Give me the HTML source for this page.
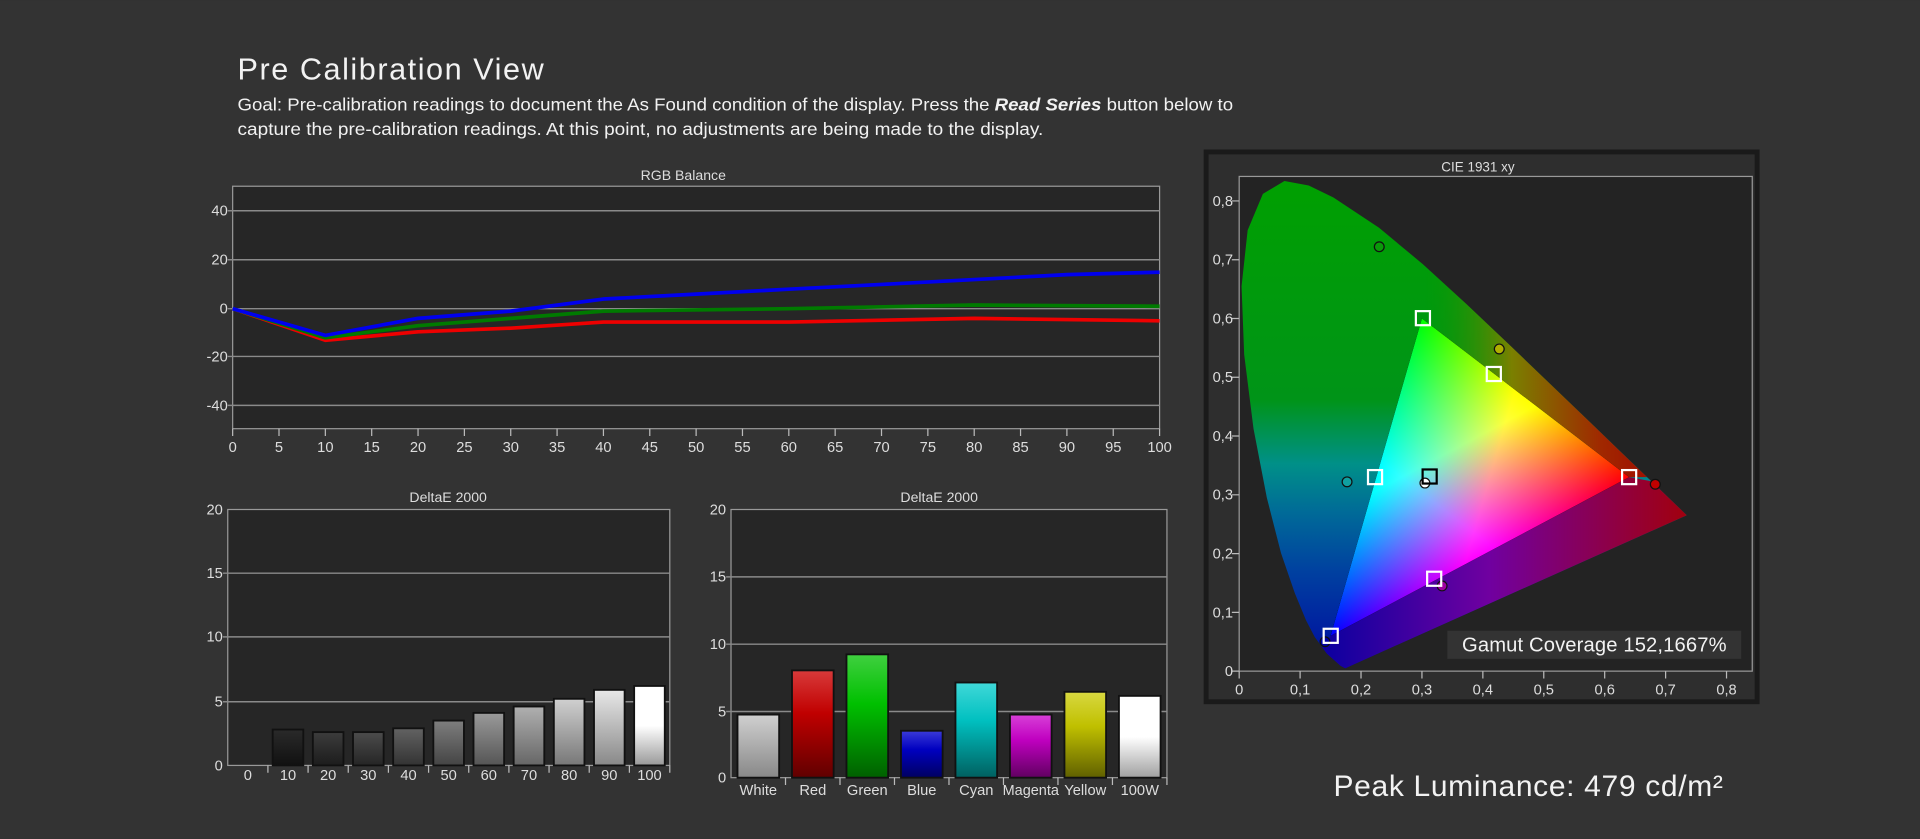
<!DOCTYPE html>
<html><head><meta charset="utf-8"><style>
html,body{margin:0;padding:0;background:#333;width:1920px;height:839px;overflow:hidden}
svg{display:block}
text{font-family:"Liberation Sans",sans-serif}
</style></head><body>
<svg width="1920" height="839" viewBox="0 0 1568 685" xmlns="http://www.w3.org/2000/svg">
<defs>
<linearGradient id="loc" x1="0" y1="0.84" x2="0" y2="0" gradientUnits="userSpaceOnUse">
<stop offset="0" stop-color="#00a000"/><stop offset="0.45" stop-color="#009418"/><stop offset="0.58" stop-color="#009088"/><stop offset="0.68" stop-color="#006a98"/><stop offset="0.8" stop-color="#0040a0"/><stop offset="1" stop-color="#0008a0"/>
</linearGradient>
<linearGradient id="rreg" x1="0.3" y1="0" x2="0.72" y2="0" gradientUnits="userSpaceOnUse">
<stop offset="0" stop-color="#009a00" stop-opacity="0"/><stop offset="0.35" stop-color="#7a8000"/><stop offset="0.7" stop-color="#a02800"/><stop offset="1" stop-color="#a00000"/>
</linearGradient>
<linearGradient id="preg" x1="0.15" y1="0" x2="0.73" y2="0" gradientUnits="userSpaceOnUse">
<stop offset="0" stop-color="#1000a0"/><stop offset="0.45" stop-color="#7000a0"/><stop offset="1" stop-color="#a00010"/>
</linearGradient>
<linearGradient id="tr" x1="0.64" y1="0.33" x2="0.2547" y2="0.437" gradientUnits="userSpaceOnUse">
<stop offset="0" stop-color="#ff0000"/><stop offset="0.55" stop-color="#ff0000"/><stop offset="1" stop-color="#000"/>
</linearGradient>
<linearGradient id="tg" x1="0.30" y1="0.60" x2="0.4933" y2="0.2492" gradientUnits="userSpaceOnUse">
<stop offset="0" stop-color="#00ff00"/><stop offset="0.55" stop-color="#00ff00"/><stop offset="1" stop-color="#000"/>
</linearGradient>
<linearGradient id="tb" x1="0.15" y1="0.06" x2="0.471" y2="0.4642" gradientUnits="userSpaceOnUse">
<stop offset="0" stop-color="#0000ff"/><stop offset="0.55" stop-color="#0000ff"/><stop offset="1" stop-color="#000"/>
</linearGradient>
<clipPath id="lc"><path d="M0.1741,0.005 L0.1666,0.0089 0.144,0.0297 0.1241,0.0578 0.1096,0.0868 0.0913,0.1327 0.0687,0.2007 0.0454,0.295 0.0235,0.4127 0.0082,0.5384 0.0039,0.6548 0.0139,0.7502 0.0389,0.812 0.0743,0.8338 0.1142,0.8262 0.1547,0.8059 0.2296,0.7543 0.3016,0.6923 0.3731,0.6245 0.4441,0.5547 0.5125,0.4866 0.5752,0.4242 0.627,0.3725 0.6915,0.3083 0.7347,0.2653 Z"/></clipPath>
<linearGradient id="b1" x1="0" y1="0" x2="0" y2="1"><stop offset="0" stop-color="#2a2a2a"/><stop offset="1" stop-color="#111"/></linearGradient>
<linearGradient id="b2" x1="0" y1="0" x2="0" y2="1"><stop offset="0" stop-color="#3c3c3c"/><stop offset="1" stop-color="#1c1c1c"/></linearGradient>
<linearGradient id="b3" x1="0" y1="0" x2="0" y2="1"><stop offset="0" stop-color="#4c4c4c"/><stop offset="1" stop-color="#252525"/></linearGradient>
<linearGradient id="b4" x1="0" y1="0" x2="0" y2="1"><stop offset="0" stop-color="#626262"/><stop offset="1" stop-color="#333"/></linearGradient>
<linearGradient id="b5" x1="0" y1="0" x2="0" y2="1"><stop offset="0" stop-color="#7e7e7e"/><stop offset="1" stop-color="#444"/></linearGradient>
<linearGradient id="b6" x1="0" y1="0" x2="0" y2="1"><stop offset="0" stop-color="#9a9a9a"/><stop offset="1" stop-color="#555"/></linearGradient>
<linearGradient id="b7" x1="0" y1="0" x2="0" y2="1"><stop offset="0" stop-color="#b0b0b0"/><stop offset="1" stop-color="#666"/></linearGradient>
<linearGradient id="b8" x1="0" y1="0" x2="0" y2="1"><stop offset="0" stop-color="#d0d0d0"/><stop offset="1" stop-color="#777"/></linearGradient>
<linearGradient id="b9" x1="0" y1="0" x2="0" y2="1"><stop offset="0" stop-color="#e8e8e8"/><stop offset="1" stop-color="#888"/></linearGradient>
<linearGradient id="b10" x1="0" y1="0" x2="0" y2="1"><stop offset="0" stop-color="#fff"/><stop offset="0.5" stop-color="#fff"/><stop offset="1" stop-color="#999"/></linearGradient>
<linearGradient id="cW" x1="0" y1="0" x2="0" y2="1"><stop offset="0" stop-color="#d0d0d0"/><stop offset="1" stop-color="#888"/></linearGradient>
<linearGradient id="cR" x1="0" y1="0" x2="0" y2="1"><stop offset="0" stop-color="#d83a3a"/><stop offset="0.4" stop-color="#c00000"/><stop offset="1" stop-color="#600000"/></linearGradient>
<linearGradient id="cG" x1="0" y1="0" x2="0" y2="1"><stop offset="0" stop-color="#40d040"/><stop offset="0.4" stop-color="#00c000"/><stop offset="1" stop-color="#006000"/></linearGradient>
<linearGradient id="cB" x1="0" y1="0" x2="0" y2="1"><stop offset="0" stop-color="#3a3ad8"/><stop offset="0.4" stop-color="#0000c0"/><stop offset="1" stop-color="#000060"/></linearGradient>
<linearGradient id="cC" x1="0" y1="0" x2="0" y2="1"><stop offset="0" stop-color="#40d8d8"/><stop offset="0.4" stop-color="#00c0c0"/><stop offset="1" stop-color="#006060"/></linearGradient>
<linearGradient id="cM" x1="0" y1="0" x2="0" y2="1"><stop offset="0" stop-color="#d840d8"/><stop offset="0.4" stop-color="#c000c0"/><stop offset="1" stop-color="#600060"/></linearGradient>
<linearGradient id="cY" x1="0" y1="0" x2="0" y2="1"><stop offset="0" stop-color="#d8d840"/><stop offset="0.4" stop-color="#c0c000"/><stop offset="1" stop-color="#606000"/></linearGradient>
<linearGradient id="cX" x1="0" y1="0" x2="0" y2="1"><stop offset="0" stop-color="#fff"/><stop offset="0.5" stop-color="#fff"/><stop offset="1" stop-color="#a0a0a0"/></linearGradient>
</defs>
<rect width="1568" height="685" fill="#333"/>
<text x="194" y="65" font-size="25" fill="#f2f2f2" textLength="250">Pre Calibration View</text>
<text x="194" y="90" font-size="14.5" fill="#f2f2f2" textLength="813" lengthAdjust="spacingAndGlyphs">Goal: Pre-calibration readings to document the As Found condition of the display. Press the <tspan font-style="italic" font-weight="bold">Read Series</tspan> button below to</text>
<text x="194" y="110" font-size="14.5" fill="#f2f2f2" textLength="658" lengthAdjust="spacingAndGlyphs">capture the pre-calibration readings. At this point, no adjustments are being made to the display.</text>

<!-- RGB Balance -->
<text x="558" y="147" font-size="11.5" fill="#ddd" text-anchor="middle">RGB Balance</text>
<rect x="190" y="152" width="757" height="198" fill="#262626" stroke="#999" stroke-width="1"/>
<g stroke="#8a8a8a" stroke-width="1.2">
<line x1="186" y1="172" x2="947" y2="172"/><line x1="186" y1="212" x2="947" y2="212"/><line x1="186" y1="252" x2="947" y2="252"/><line x1="186" y1="291" x2="947" y2="291"/><line x1="186" y1="331" x2="947" y2="331"/>
</g>
<g fill="#ddd" font-size="12" text-anchor="end">
<text x="186" y="176">40</text><text x="186" y="216">20</text><text x="186" y="256">0</text><text x="186" y="295">-20</text><text x="186" y="335">-40</text>
</g>
<g stroke="#bbb" stroke-width="1">
<path d="M190,350v6M227.85,350v6M265.7,350v6M303.55,350v6M341.4,350v6M379.25,350v6M417.1,350v6M454.95,350v6M492.8,350v6M530.65,350v6M568.5,350v6M606.35,350v6M644.2,350v6M682.05,350v6M719.9,350v6M757.75,350v6M795.6,350v6M833.45,350v6M871.3,350v6M909.15,350v6M947,350v6"/>
</g>
<g fill="#ddd" font-size="12" text-anchor="middle">
<text x="190" y="369">0</text><text x="227.85" y="369">5</text><text x="265.7" y="369">10</text><text x="303.55" y="369">15</text><text x="341.4" y="369">20</text><text x="379.25" y="369">25</text><text x="417.1" y="369">30</text><text x="454.95" y="369">35</text><text x="492.8" y="369">40</text><text x="530.65" y="369">45</text><text x="568.5" y="369">50</text><text x="606.35" y="369">55</text><text x="644.2" y="369">60</text><text x="682.05" y="369">65</text><text x="719.9" y="369">70</text><text x="757.75" y="369">75</text><text x="795.6" y="369">80</text><text x="833.45" y="369">85</text><text x="871.3" y="369">90</text><text x="909.15" y="369">95</text><text x="947" y="369">100</text>
</g>
<g fill="none" stroke-width="3" stroke-linejoin="round">
<polyline stroke="#ee0000" points="190,252 265.7,277.8 341.4,270.9 417.1,267.9 492.8,262.9 644.2,262.9 795.6,259.9 947,261.9"/>
<polyline stroke="#007a00" points="190,252 265.7,275.8 341.4,265.9 417.1,259.9 492.8,254 644.2,252 795.6,249 947,250"/>
<polyline stroke="#0000ee" points="190,252 265.7,273.8 341.4,259.9 417.1,254 492.8,244.1 568.5,240.1 644.2,236.1 719.9,232.2 795.6,228.2 871.3,224.2 947,222.2"/>
</g>

<!-- DeltaE left -->
<text x="366" y="410" font-size="11.5" fill="#ddd" text-anchor="middle">DeltaE 2000</text>
<rect x="186" y="416" width="361" height="209" fill="#262626" stroke="#999"/>
<g stroke="#8a8a8a" stroke-width="1.2">
<line x1="182" y1="468" x2="547" y2="468"/><line x1="182" y1="520" x2="547" y2="520"/><line x1="182" y1="573" x2="547" y2="573"/>
</g>
<g fill="#ddd" font-size="12" text-anchor="end">
<text x="182" y="420">20</text><text x="182" y="472">15</text><text x="182" y="524">10</text><text x="182" y="577">5</text><text x="182" y="629">0</text>
</g>
<g stroke="#111" stroke-width="1.5">
<rect x="222.7" y="595.7" width="25" height="29.3" fill="url(#b1)"/>
<rect x="255.5" y="597.8" width="25" height="27.2" fill="url(#b2)"/>
<rect x="288.3" y="597.8" width="25" height="27.2" fill="url(#b3)"/>
<rect x="321.1" y="594.7" width="25" height="30.3" fill="url(#b4)"/>
<rect x="353.9" y="588.4" width="25" height="36.6" fill="url(#b5)"/>
<rect x="386.7" y="582.1" width="25" height="42.9" fill="url(#b6)"/>
<rect x="419.5" y="576.9" width="25" height="48.1" fill="url(#b7)"/>
<rect x="452.3" y="570.6" width="25" height="54.4" fill="url(#b8)"/>
<rect x="485.1" y="563.3" width="25" height="61.7" fill="url(#b9)"/>
<rect x="517.9" y="560.1" width="25" height="64.9" fill="url(#b10)"/>
</g>
<g stroke="#bbb"><path d="M218.8,625v6M251.6,625v6M284.4,625v6M317.2,625v6M350,625v6M382.8,625v6M415.6,625v6M448.4,625v6M481.2,625v6M514,625v6M547,625v6"/></g>
<g fill="#ddd" font-size="12" text-anchor="middle">
<text x="202.4" y="637">0</text><text x="235.2" y="637">10</text><text x="268" y="637">20</text><text x="300.8" y="637">30</text><text x="333.6" y="637">40</text><text x="366.4" y="637">50</text><text x="399.2" y="637">60</text><text x="432" y="637">70</text><text x="464.8" y="637">80</text><text x="497.6" y="637">90</text><text x="530.4" y="637">100</text>
</g>

<!-- DeltaE right -->
<text x="767" y="410" font-size="11.5" fill="#ddd" text-anchor="middle">DeltaE 2000</text>
<rect x="597" y="416" width="356" height="219" fill="#262626" stroke="#999"/>
<g stroke="#8a8a8a" stroke-width="1.2">
<line x1="593" y1="471" x2="953" y2="471"/><line x1="593" y1="526" x2="953" y2="526"/><line x1="593" y1="581" x2="953" y2="581"/>
</g>
<g fill="#ddd" font-size="12" text-anchor="end">
<text x="593" y="420">20</text><text x="593" y="475">15</text><text x="593" y="530">10</text><text x="593" y="585">5</text><text x="593" y="639">0</text>
</g>
<g stroke="#111" stroke-width="1.5">
<rect x="602.3" y="583.5" width="34" height="51.5" fill="url(#cW)"/>
<rect x="646.8" y="547.4" width="34" height="87.6" fill="url(#cR)"/>
<rect x="691.3" y="534.3" width="34" height="100.7" fill="url(#cG)"/>
<rect x="735.8" y="596.7" width="34" height="38.3" fill="url(#cB)"/>
<rect x="780.3" y="557.3" width="34" height="77.7" fill="url(#cC)"/>
<rect x="824.8" y="583.5" width="34" height="51.5" fill="url(#cM)"/>
<rect x="869.3" y="564.9" width="34" height="70.1" fill="url(#cY)"/>
<rect x="913.8" y="568.2" width="34" height="66.8" fill="url(#cX)"/>
</g>
<g stroke="#bbb"><path d="M641.5,635v6M686,635v6M730.5,635v6M775,635v6M819.5,635v6M864,635v6M908.5,635v6M953,635v6"/></g>
<g fill="#ddd" font-size="12" text-anchor="middle">
<text x="619.3" y="649">White</text><text x="663.8" y="649">Red</text><text x="708.3" y="649">Green</text><text x="752.8" y="649">Blue</text><text x="797.3" y="649">Cyan</text><text x="841.8" y="649" textLength="46" lengthAdjust="spacingAndGlyphs">Magenta</text><text x="886.3" y="649">Yellow</text><text x="930.8" y="649">100W</text>
</g>

<!-- CIE -->
<rect x="985" y="124" width="450" height="449" fill="#2e2e2e" stroke="#1a1a1a" stroke-width="4"/>
<text x="1207" y="140" font-size="11" fill="#ddd" text-anchor="middle">CIE 1931 xy</text>
<rect x="1012" y="144" width="419" height="404" fill="#232323" stroke="#999"/>
<g transform="translate(1012,548) scale(497.5,-480)">
<g clip-path="url(#lc)">
<rect x="0" y="0" width="0.8" height="0.9" fill="url(#loc)"/>
<polygon points="0.30,0.60 0.30,0.9 0.8,0.9 0.8,0.33 0.64,0.33" fill="url(#rreg)"/>
<polygon points="0.15,0.06 0.64,0.33 0.8,0.3 0.8,0 0.1,0" fill="url(#preg)"/>
</g>
<g style="isolation:isolate">
<polygon points="0.64,0.33 0.30,0.60 0.15,0.06" fill="#000"/>
<polygon points="0.64,0.33 0.30,0.60 0.15,0.06" fill="url(#tr)" style="mix-blend-mode:screen"/>
<polygon points="0.64,0.33 0.30,0.60 0.15,0.06" fill="url(#tg)" style="mix-blend-mode:screen"/>
<polygon points="0.64,0.33 0.30,0.60 0.15,0.06" fill="url(#tb)" style="mix-blend-mode:screen"/>
</g>
</g>
<g stroke="#bbb"><path d="M1012,548v6M1061.75,548v6M1111.5,548v6M1161.25,548v6M1211,548v6M1260.75,548v6M1310.5,548v6M1360.25,548v6M1410,548v6M1006,548h6M1006,500h6M1006,452h6M1006,404h6M1006,356h6M1006,308h6M1006,260h6M1006,212h6M1006,164h6"/></g>
<g fill="#ddd" font-size="12" text-anchor="middle">
<text x="1012" y="567">0</text><text x="1061.75" y="567">0,1</text><text x="1111.5" y="567">0,2</text><text x="1161.25" y="567">0,3</text><text x="1211" y="567">0,4</text><text x="1260.75" y="567">0,5</text><text x="1310.5" y="567">0,6</text><text x="1360.25" y="567">0,7</text><text x="1410" y="567">0,8</text>
</g>
<g fill="#ddd" font-size="12" text-anchor="end">
<text x="1007" y="552">0</text><text x="1007" y="504">0,1</text><text x="1007" y="456">0,2</text><text x="1007" y="408">0,3</text><text x="1007" y="360">0,4</text><text x="1007" y="312">0,5</text><text x="1007" y="264">0,6</text><text x="1007" y="216">0,7</text><text x="1007" y="168">0,8</text>
</g>
<!-- measured circles -->
<g stroke="#111" stroke-width="1">
<circle cx="1126.4" cy="201.4" r="4" fill="#0a9a0a"/>
<circle cx="1224.4" cy="284.9" r="4" fill="#b0b000"/>
<circle cx="1100.1" cy="393.4" r="4" fill="#10a0a0"/>
<circle cx="1351.8" cy="395.4" r="4" fill="#c00000"/>
<circle cx="1177.7" cy="478.4" r="4" fill="#a000a0"/>
<circle cx="1082.1" cy="524" r="4" fill="#0000a0"/>
<circle cx="1163.7" cy="394.4" r="4" fill="#fff"/>
</g>
<g fill="none" stroke-width="1.8">
<rect x="1156.3" y="254" width="11.5" height="11.5" stroke="#fff"/>
<rect x="1214.2" y="299.6" width="11.5" height="11.5" stroke="#fff"/>
<rect x="1117.2" y="383.8" width="11.5" height="11.5" stroke="#fff"/>
<rect x="1324.7" y="383.8" width="11.5" height="11.5" stroke="#fff"/>
<rect x="1165.5" y="466.8" width="11.5" height="11.5" stroke="#fff"/>
<rect x="1081" y="513.4" width="11.5" height="11.5" stroke="#fff"/>
<rect x="1161.8" y="383.3" width="11.5" height="11.5" stroke="#000"/>
</g>
<rect x="1182" y="515" width="240" height="23" fill="#333"/>
<text x="1194" y="532" font-size="16.5" fill="#f2f2f2" textLength="216">Gamut Coverage 152,1667%</text>

<text x="1089" y="650" font-size="24.5" fill="#f2f2f2" textLength="318">Peak Luminance: 479 cd/m²</text>
</svg>
</body></html>
